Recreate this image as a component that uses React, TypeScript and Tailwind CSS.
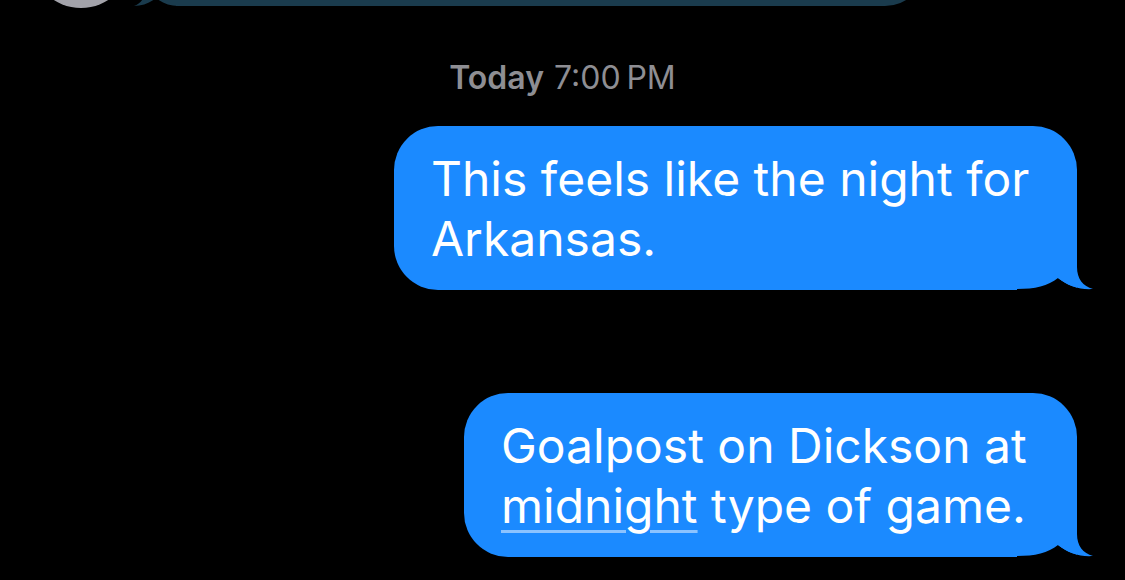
import React from "react";

function Tail() {
  return (
    <svg
      className="absolute right-[-18px] bottom-[-1px]"
      width="78"
      height="42"
      viewBox="0 0 78 42"
    >
      <path d="M0,40 C18,40 31,37 41,29 C51,37 63,41 76,40 L78,42 L0,42 Z" fill="#000" />
      <path
        d="M59,4 L60,4 L60,18 C60,30 66,37 76,40 C63,41 51,37 41,29 L59,29 Z"
        fill="#1b8aff"
      />
    </svg>
  );
}

function Bubble({ children, width, mt }: { children: React.ReactNode; width: string; mt: string }) {
  return (
    <div className={`relative self-end mr-[48px] ${mt}`}>
      <div
        className={`${width} bg-[#1b8aff] rounded-[44px] rounded-br-none pl-[37px] pt-[23px] pb-[21px] text-white text-[48px] leading-[60px] whitespace-nowrap`}
      >
        <span className="relative z-10">{children}</span>
      </div>
      <Tail />
    </div>
  );
}

export default function App() {
  return (
    <div
      className="w-[1125px] h-[580px] bg-black overflow-hidden flex flex-col"
      style={{ fontFamily: "Inter, 'Noto Sans', sans-serif" }}
    >
      <div className="flex items-end h-[100px] -mt-[92px] shrink-0">
        <div className="w-[100px] h-[100px] rounded-full bg-[#a3a3aa] ml-[31px]" />
        <div className="relative ml-[45px] mb-[2px]">
          <div className="w-[749px] h-[100px] bg-[#1a3b4d] rounded-[40px] rounded-bl-none" />
          <svg className="absolute left-[-44px] bottom-0" width="46" height="30" viewBox="0 0 46 30">
            <path d="M46,0 L46,30 C38,30 30,27 24,22 C18,27 10,30 2,30 C10,27 14,20 14,10 L14,0 Z" fill="#1a3b4d" />
          </svg>
        </div>
      </div>

      <div className="mt-[50px] h-[40px] flex items-center justify-center text-[32px] leading-[40px] text-[#8e8e93]">
        <span className="font-semibold">Today</span>
        <span className="ml-[10px]">7:00&#8201;PM</span>
      </div>

      <Bubble width="w-[683px]" mt="mt-[28px]">
        This feels like the night for
        <br />
        Arkansas.
      </Bubble>

      <Bubble width="w-[613px]" mt="mt-[103px]">
        Goalpost on Dickson at
        <br />
        <span className="underline decoration-[3px] underline-offset-[7px] decoration-[#8cc3ff]">midnight</span> type of game.
      </Bubble>
    </div>
  );
}
